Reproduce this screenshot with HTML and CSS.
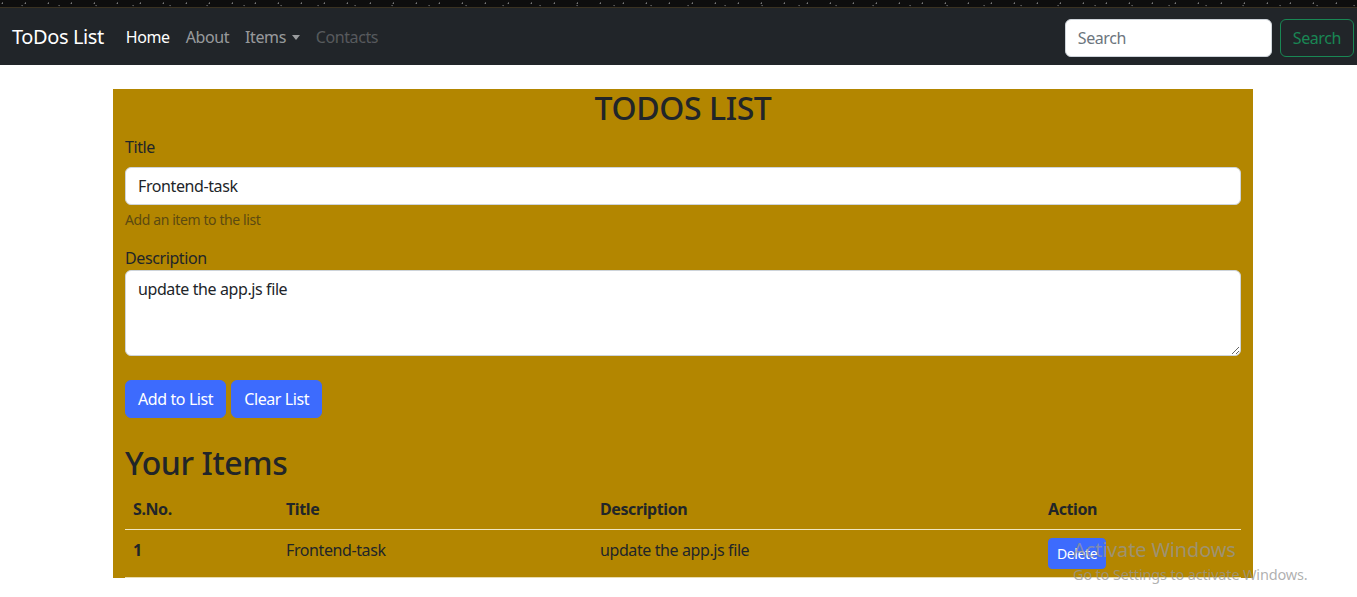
FILE: index.html
```html
<!DOCTYPE html>
<html lang="en">
<head>
<meta charset="utf-8">
<title>ToDos List</title>
<link rel="stylesheet" href="styles.css">
</head>
<body>
<div class="topstrip"></div>
<nav class="navbar">
  <a class="brand" href="#">ToDos List</a>
  <ul class="nav-links">
    <li><a class="nav-link active" href="#">Home</a></li>
    <li><a class="nav-link" href="#">About</a></li>
    <li><a class="nav-link dropdown" href="#">Items <span class="caret"></span></a></li>
    <li><a class="nav-link disabled" href="#">Contacts</a></li>
  </ul>
  <form class="search-form">
    <input class="search-input" type="search" placeholder="Search">
    <button class="btn-outline-success" type="button">Search</button>
  </form>
</nav>

<main class="container">
  <h2 class="page-title">TODOS LIST</h2>
  <div class="form-group">
    <label class="form-label">Title</label>
    <input class="form-control" type="text" value="Frontend-task">
    <div class="form-text">Add an item to the list</div>
  </div>
  <div class="form-group desc-group">
    <label class="plain-label">Description</label>
    <textarea class="form-control textarea" rows="3">update the app.js file</textarea>
  </div>
  <div class="btn-row">
    <button class="btn-primary" type="button">Add to List</button>
    <button class="btn-primary" type="button">Clear List</button>
  </div>
  <h2 class="items-title">Your Items</h2>
  <table class="table">
    <thead>
      <tr>
        <th class="c1">S.No.</th>
        <th class="c2">Title</th>
        <th class="c3">Description</th>
        <th class="c4">Action</th>
      </tr>
    </thead>
    <tbody>
      <tr>
        <th>1</th>
        <td>Frontend-task</td>
        <td>update the app.js file</td>
        <td><button class="btn-primary btn-sm" type="button">Delete</button></td>
      </tr>
    </tbody>
  </table>
</main>

<div class="activate">
  <div class="act-title">Activate Windows</div>
  <div class="act-sub">Go to Settings to activate Windows.</div>
</div>
</body>
</html>
```

FILE: styles.css
```css
* { box-sizing: border-box; }

html, body {
  margin: 0;
  padding: 0;
  background: #fff;
}

body {
  font-family: "Noto Sans", "Open Sans", sans-serif;
  font-size: 16px;
  line-height: 1.5;
  letter-spacing: -0.025em;
  color: #212529;
  overflow: hidden;
}

.topstrip {
  height: 8px;
  background-color: #0e0e0e;
  background-image:
    radial-gradient(circle at 10% 40%, #777 0.6px, transparent 1px),
    radial-gradient(circle at 60% 70%, #555 0.6px, transparent 1px);
  background-size: 23px 8px, 37px 8px;
  border-bottom: 1px solid #3a3222;
}

.navbar {
  height: 57px;
  background: #212529;
  display: flex;
  align-items: center;
  padding: 0 3px 0 12px;
}

.brand {
  color: #fff;
  font-size: 20px;
  text-decoration: none;
  margin-right: 14px;
  white-space: nowrap;
}

.nav-links {
  list-style: none;
  margin: 0;
  padding: 0;
  display: flex;
  flex: 1;
}

.nav-link {
  display: block;
  padding: 8px;
  color: rgba(255,255,255,.55);
  text-decoration: none;
  font-size: 16px;
}

.nav-link.active { color: #fff; }
.nav-link.disabled { color: rgba(255,255,255,.25); }

.caret {
  display: inline-block;
  width: 0;
  height: 0;
  margin-left: 2px;
  vertical-align: 3px;
  border-top: 5px solid;
  border-left: 4.5px solid transparent;
  border-right: 4.5px solid transparent;
}

.search-form {
  display: flex;
  align-items: center;
  gap: 8px;
  margin-top: 2px;
}

.search-input {
  width: 207px;
  height: 38px;
  border: 1px solid #ced4da;
  border-radius: 6px;
  padding: 6px 12px;
  font: inherit;
  letter-spacing: inherit;
  color: #212529;
  background: #fff;
}

.search-input::placeholder { color: #6c757d; }

.btn-outline-success {
  height: 38px;
  padding: 6px 12px;
  border: 1px solid #198754;
  border-radius: 6px;
  background: transparent;
  color: #198754;
  font: inherit;
  letter-spacing: inherit;
}

.container {
  width: 1140px;
  margin: 24px 0 0 113px;
  padding: 0 12px;
  background: #b38600;
}

.page-title {
  margin: 0 0 8px;
  font-size: 32px;
  font-weight: 500;
  line-height: 1.2;
  text-align: center;
}

.form-group { margin-bottom: 16px; }

.form-label {
  display: block;
  margin-bottom: 8px;
}

.plain-label { display: block; }

.form-control {
  display: block;
  width: 100%;
  height: 38px;
  padding: 6px 12px;
  font: inherit;
  letter-spacing: inherit;
  color: #212529;
  background: #fff;
  border: 1px solid #ced4da;
  border-radius: 6px;
}

.textarea {
  height: 86px;
  resize: vertical;
}

.desc-group { margin-bottom: 24px; }

.form-text {
  margin-top: 4px;
  font-size: 14px;
  color: #5c4a10;
}

.btn-row {
  display: flex;
  gap: 5px;
}

.btn-primary {
  height: 38px;
  padding: 6px 12px;
  font: inherit;
  letter-spacing: inherit;
  color: #fff;
  background: #3d6bfd;
  border: 1px solid #3d6bfd;
  border-radius: 6px;
}

.btn-sm {
  height: 31px;
  padding: 4px 8px;
  font-size: 14px;
  border-radius: 4px;
}

.items-title {
  margin: 26px 0 6px;
  font-size: 32px;
  font-weight: 500;
  line-height: 1.2;
}

.table {
  width: 100%;
  border-collapse: collapse;
  margin: 0;
}

.table th, .table td {
  padding: 8px;
  text-align: left;
  vertical-align: top;
  border-bottom: 1px solid #e8dcb0;
}

.table th { font-weight: 700; }

.table thead th { border-bottom: 1px solid #f0e6c0; }

.c1 { width: 153px; }
.c2 { width: 314px; }
.c3 { width: 448px; }

.activate {
  position: absolute;
  left: 1073px;
  top: 536px;
  color: rgba(150,150,150,.75);
  pointer-events: none;
  letter-spacing: -0.01em;
}

.act-title {
  font-size: 20px;
  line-height: 28px;
}

.act-sub {
  font-size: 14.5px;
  line-height: 20px;
}
```
